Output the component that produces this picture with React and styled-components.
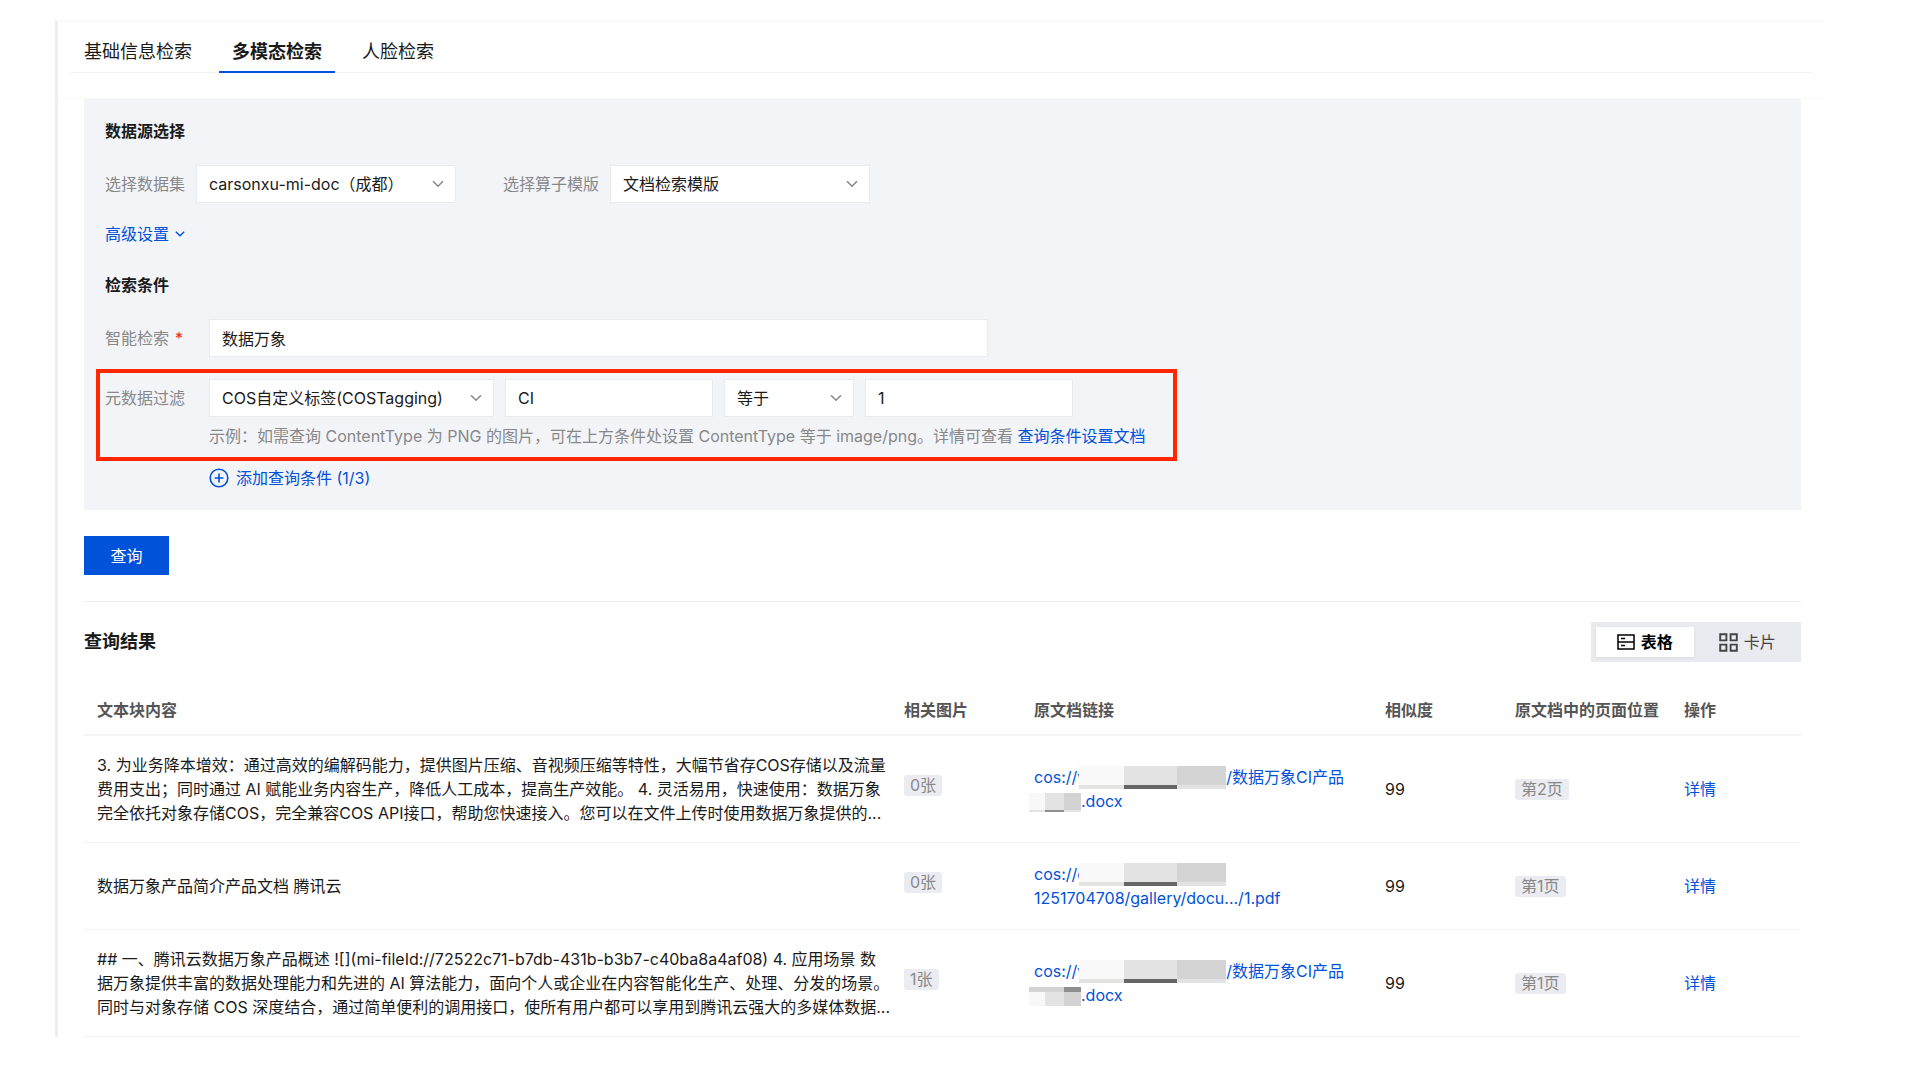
import React, { useState } from "react";
import styled, { createGlobalStyle } from "styled-components";

const GlobalStyle = createGlobalStyle`
  * {
    box-sizing: border-box;
  }
  body {
    margin: 0;
    background: #fff;
  }
  body, button, input, select {
    font-family: Inter, "Noto Sans CJK SC", sans-serif;
    font-size: 16px;
    line-height: 24px;
    color: #1a1a1a;
  }
`;

const Page = styled.div`
  margin: 20px 95px 40px 55px;
  border-left: 3px solid #eceef4;
  border-top: 1px solid #f7f7f9;
`;

const Header = styled.header`
  padding: 0 12px 25px 13px;
  border-bottom: 1px solid #f8f9fb;
`;

const Tabs = styled.nav`
  display: flex;
  gap: 14px;
  border-bottom: 1px solid #f0f1f4;
`;

const Tab = styled.button`
  padding: 19px 13px 7px;
  margin-bottom: -1px;
  border: none;
  border-bottom: 2px solid ${({ $active }) => ($active ? "#0052d9" : "transparent")};
  background: none;
  font-size: 18px;
  font-weight: ${({ $active }) => ($active ? 700 : 400)};
  cursor: pointer;
`;

const Main = styled.main`
  padding: 0 24px 0 26px;
`;

const Panel = styled.section`
  padding: 20px 21px;
  background: #f2f4f8;
`;

const PanelTitle = styled.h3`
  margin: 0 0 22px;
  font-size: 16px;
  line-height: 24px;
  font-weight: 700;
`;

const Row = styled.div`
  display: flex;
  align-items: center;
`;

const Label = styled.label`
  flex: none;
  min-width: ${({ $wide }) => ($wide ? "104px" : "0")};
  margin-right: ${({ $wide }) => ($wide ? "0" : "11px")};
  color: #888;
`;

const Required = styled.span`
  margin-left: 6px;
  color: #ff2020;
`;

const SelectBox = styled.div`
  display: grid;
  align-items: center;
  width: ${({ $width }) => $width}px;

  & > * {
    grid-area: 1 / 1;
  }
  & > svg {
    justify-self: end;
    margin-right: 12px;
    pointer-events: none;
  }
`;

const Select = styled.select`
  width: 100%;
  height: 38px;
  padding: 0 12px;
  border: 1px solid #e9ebf0;
  border-radius: 0;
  background: #fff;
  appearance: none;
`;

const Input = styled.input`
  width: ${({ $width }) => $width}px;
  height: 38px;
  padding: 0 12px;
  border: 1px solid #e9ebf0;
  border-radius: 0;
  background: #fff;
`;

const FieldGap = styled.div`
  width: 47px;
`;

const TextButton = styled.button`
  display: flex;
  align-items: center;
  gap: ${({ $gap }) => $gap}px;
  padding: 0;
  border: none;
  background: none;
  color: #0052d9;
  cursor: pointer;
`;

const Advanced = styled(TextButton)`
  margin: 19px 0 27px;
`;

const AddCondition = styled(TextButton)`
  margin: 5px 0 0 104px;
`;

const Highlight = styled.div`
  width: 1081px;
  max-width: 100%;
  margin: 12px 0 0 -9px;
  padding: 6px 5px 9px;
  border: 4px solid #ff2600;
`;

const Filters = styled.div`
  display: flex;
  gap: 11px;
`;

const Hint = styled.p`
  margin: 7px 0 0 104px;
  color: #888;
  white-space: nowrap;
`;

const Link = styled.a`
  color: #0052d9;
  text-decoration: none;
`;

const QueryButton = styled.button`
  display: block;
  width: 85px;
  height: 39px;
  margin: 26px 0;
  border: none;
  background: #0052d9;
  color: #fff;
  cursor: pointer;
`;

const ResultHead = styled.div`
  display: flex;
  align-items: center;
  justify-content: space-between;
  padding-top: 20px;
  border-top: 1px solid #ebedf1;
`;

const ResultTitle = styled.h2`
  margin: 0;
  font-size: 18px;
  font-weight: 700;
`;

const Segment = styled.div`
  display: flex;
  gap: 5px;
  width: 210px;
  height: 40px;
  padding: 5px;
  background: #e9ebf0;
`;

const SegmentButton = styled.button`
  flex: 1;
  display: flex;
  align-items: center;
  justify-content: center;
  gap: 6px;
  padding: 0;
  border: none;
  background: ${({ $active }) => ($active ? "#fff" : "none")};
  box-shadow: ${({ $active }) => ($active ? "0 1px 3px rgba(0, 0, 0, 0.08)" : "none")};
  color: ${({ $active }) => ($active ? "#000" : "#444")};
  font-weight: ${({ $active }) => ($active ? 700 : 400)};
  cursor: pointer;
`;

const Table = styled.table`
  width: 100%;
  margin-top: 24px;
  table-layout: fixed;
  border-spacing: 0;
`;

const Th = styled.th`
  width: ${({ $width }) => ($width ? `${$width}px` : "auto")};
  height: 50px;
  padding: 0 13px;
  border-bottom: 2px solid #f2f3f7;
  color: #555;
  font-weight: 700;
  text-align: left;
  white-space: nowrap;
`;

const Td = styled.td`
  height: 87px;
  padding: 17px 13px;
  border-bottom: 1px solid #f1f2f6;
  white-space: nowrap;
`;

const ImageTd = styled(Td)`
  padding-bottom: 25px;
`;

const Tag = styled.span`
  display: inline-block;
  padding: 0 6px;
  border-radius: 3px;
  background: #ebecf1;
  color: #888;
  line-height: 21px;
`;

const DocLink = styled(Link)`
  display: block;
`;

const LongMosaic = styled.svg`
  position: relative;
  display: inline-block;
  margin-left: -7px;
  vertical-align: -6px;
`;

const ShortMosaic = styled.svg`
  display: inline-block;
  margin-left: -5px;
  vertical-align: -5px;
`;

const Chevron = ({ size = 12, color = "#888" }) => (
  <svg width={size} height={size} viewBox="0 0 12 12" fill="none" stroke={color} strokeWidth="1.6">
    <path d="M1 3.2 6 8.2 11 3.2" />
  </svg>
);

const PlusCircle = () => (
  <svg width="20" height="20" viewBox="0 0 20 20" fill="none" stroke="#0052d9" strokeWidth="1.6">
    <circle cx="10" cy="10" r="8.8" />
    <path d="M10 5.6v8.8M5.6 10h8.8" />
  </svg>
);

const TableIcon = () => (
  <svg width="18" height="16" viewBox="0 0 18 16" fill="none" stroke="currentColor" strokeWidth="1.5">
    <path d="M1 1h16v14H1zM1 8h16M4 4.6h4M4 11.6h4" />
  </svg>
);

const CardIcon = () => (
  <svg width="19" height="19" viewBox="0 0 19 19" fill="none" stroke="currentColor" strokeWidth="1.9">
    <path d="M1.2 1.2h6.2v6.2H1.2zM11.6 1.2h6.2v6.2h-6.2zM1.2 11.6h6.2v6.2H1.2zM11.6 11.6h6.2v6.2h-6.2z" />
  </svg>
);

const MaskedName = () => (
  <LongMosaic width="147" height="23" shapeRendering="crispEdges">
    <rect width="45" height="19" fill="#f9f9f9" />
    <rect x="45" width="53" height="19" fill="#e3e3e3" />
    <rect x="98" width="49" height="19" fill="#d4d4d4" />
    <rect y="19" width="45" height="4" fill="#e3e3e1" />
    <rect x="45" y="19" width="53" height="4" fill="#666" />
    <rect x="98" y="19" width="49" height="4" fill="#e2e2e2" />
  </LongMosaic>
);

const MaskedSuffix = ({ top }) => (
  <ShortMosaic width="52" height="19" shapeRendering="crispEdges">
    <rect width="16" height="19" fill="#f8f8f8" />
    <rect x="16" width="19" height="19" fill="#e3e3e3" />
    <rect x="35" width="17" height="19" fill="#d3d3d3" />
    {top ? (
      <>
        <rect width="35" height="5" fill="#d3d3d3" />
        <rect x="35" width="17" height="5" fill="#8f8f8f" />
      </>
    ) : (
      <>
        <rect y="17" width="16" height="2" fill="#e3e3e3" />
        <rect x="16" y="17" width="19" height="2" fill="#8f8f8f" />
        <rect x="35" y="17" width="17" height="2" fill="#e6e6e6" />
      </>
    )}
  </ShortMosaic>
);

const tabs = ["基础信息检索", "多模态检索", "人脸检索"];

const rows = [
  {
    id: 1,
    lines: [
      "3. 为业务降本增效：通过高效的编解码能力，提供图片压缩、音视频压缩等特性，大幅节省存COS存储以及流量",
      "费用支出；同时通过 AI 赋能业务内容生产，降低人工成本，提高生产效能。 4. 灵活易用，快速使用：数据万象",
      "完全依托对象存储COS，完全兼容COS API接口，帮助您快速接入。您可以在文件上传时使用数据万象提供的...",
    ],
    images: "0张",
    link: (
      <>
        cos://v
        <MaskedName />
        /数据万象CI产品
        <br />
        <MaskedSuffix />
        .docx
      </>
    ),
    score: 99,
    page: "第2页",
  },
  {
    id: 2,
    lines: ["数据万象产品简介产品文档 腾讯云"],
    images: "0张",
    link: (
      <>
        cos://c
        <MaskedName />
        <br />
        1251704708/gallery/docu.../1.pdf
      </>
    ),
    score: 99,
    page: "第1页",
  },
  {
    id: 3,
    lines: [
      "## 一、腾讯云数据万象产品概述 ![](mi-fileId://72522c71-b7db-431b-b3b7-c40ba8a4af08) 4. 应用场景 数",
      "据万象提供丰富的数据处理能力和先进的 AI 算法能力，面向个人或企业在内容智能化生产、处理、分发的场景。",
      "同时与对象存储 COS 深度结合，通过简单便利的调用接口，使所有用户都可以享用到腾讯云强大的多媒体数据...",
    ],
    images: "1张",
    link: (
      <>
        cos://v
        <MaskedName />
        /数据万象CI产品
        <br />
        <MaskedSuffix top />
        .docx
      </>
    ),
    score: 99,
    page: "第1页",
  },
];

export default function App() {
  const [tab, setTab] = useState("多模态检索");
  const [view, setView] = useState("table");

  return (
    <>
      <GlobalStyle />
      <Page>
        <Header>
          <Tabs>
            {tabs.map((t) => (
              <Tab key={t} $active={t === tab} onClick={() => setTab(t)}>
                {t}
              </Tab>
            ))}
          </Tabs>
        </Header>
        <Main>
          <Panel>
            <PanelTitle>数据源选择</PanelTitle>
            <Row>
              <Label htmlFor="dataset">选择数据集</Label>
              <SelectBox $width={260}>
                <Select id="dataset">
                  <option>carsonxu-mi-doc（成都）</option>
                </Select>
                <Chevron />
              </SelectBox>
              <FieldGap />
              <Label htmlFor="template">选择算子模版</Label>
              <SelectBox $width={260}>
                <Select id="template">
                  <option>文档检索模版</option>
                </Select>
                <Chevron />
              </SelectBox>
            </Row>
            <Advanced $gap={6}>
              高级设置
              <Chevron size={10} color="#0052d9" />
            </Advanced>

            <PanelTitle>检索条件</PanelTitle>
            <Row>
              <Label htmlFor="keyword" $wide>
                智能检索<Required>*</Required>
              </Label>
              <Input id="keyword" $width={779} defaultValue="数据万象" />
            </Row>
            <Highlight>
              <Row>
                <Label htmlFor="field" $wide>
                  元数据过滤
                </Label>
                <Filters>
                  <SelectBox $width={285}>
                    <Select id="field">
                      <option>COS自定义标签(COSTagging)</option>
                    </Select>
                    <Chevron />
                  </SelectBox>
                  <Input $width={208} aria-label="标签键" defaultValue="CI" />
                  <SelectBox $width={130}>
                    <Select aria-label="条件">
                      <option>等于</option>
                    </Select>
                    <Chevron />
                  </SelectBox>
                  <Input $width={208} aria-label="标签值" defaultValue="1" />
                </Filters>
              </Row>
              <Hint>
                示例：如需查询 ContentType 为 PNG 的图片，可在上方条件处设置 ContentType 等于
                image/png。详情可查看 <Link href="#doc">查询条件设置文档</Link>
              </Hint>
            </Highlight>
            <AddCondition $gap={7}>
              <PlusCircle />
              添加查询条件 (1/3)
            </AddCondition>
          </Panel>

          <QueryButton>查询</QueryButton>

          <ResultHead>
            <ResultTitle>查询结果</ResultTitle>
            <Segment>
              <SegmentButton $active={view === "table"} onClick={() => setView("table")}>
                <TableIcon />
                表格
              </SegmentButton>
              <SegmentButton $active={view === "card"} onClick={() => setView("card")}>
                <CardIcon />
                卡片
              </SegmentButton>
            </Segment>
          </ResultHead>

          <Table>
            <thead>
              <tr>
                <Th>文本块内容</Th>
                <Th $width={130}>相关图片</Th>
                <Th $width={351}>原文档链接</Th>
                <Th $width={130}>相似度</Th>
                <Th $width={169}>原文档中的页面位置</Th>
                <Th $width={130}>操作</Th>
              </tr>
            </thead>
            <tbody>
              {rows.map((r) => (
                <tr key={r.id}>
                  <Td>
                    {r.lines.map((line) => (
                      <div key={line}>{line}</div>
                    ))}
                  </Td>
                  <ImageTd>
                    <Tag>{r.images}</Tag>
                  </ImageTd>
                  <Td>
                    <DocLink href="#file">{r.link}</DocLink>
                  </Td>
                  <Td>{r.score}</Td>
                  <Td>
                    <Tag>{r.page}</Tag>
                  </Td>
                  <Td>
                    <Link href="#detail">详情</Link>
                  </Td>
                </tr>
              ))}
            </tbody>
          </Table>
        </Main>
      </Page>
    </>
  );
}
